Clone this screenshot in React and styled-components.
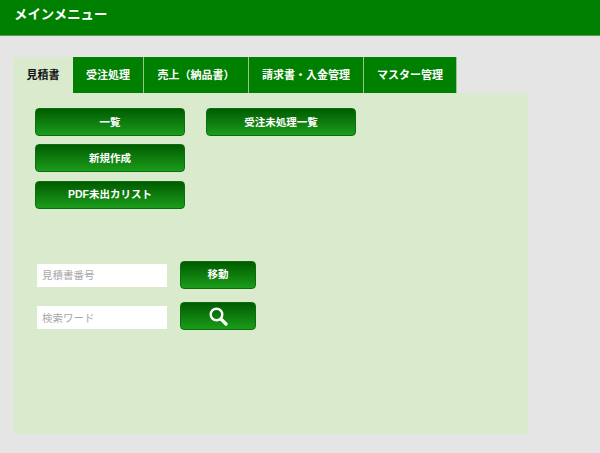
import React from "react";
import styled, { createGlobalStyle } from "styled-components";

const Global = createGlobalStyle`
html,body{margin:0;padding:0;background:#e5e5e5;}
body{font-family:"Liberation Sans","Noto Sans CJK JP",sans-serif;}
`;

const Header = styled.header`
height:35px;
background:#008000;
border-bottom:1px solid #5a9a4a;
color:#fff;
font-size:13.4px;
font-weight:bold;
line-height:30px;
padding-left:14px;
`;

const Main = styled.main`
width:515px;
padding:21px 0 0 13px;
`;

const Tabs = styled.nav`
display:flex;
height:36px;
`;

const Tab = styled.div`
display:flex;
align-items:center;
justify-content:center;
box-sizing:border-box;
width:${props => props.$w}px;
padding-bottom:2px;
font-size:11px;
font-weight:bold;
color:${props => (props.$active ? "#111" : "#fff")};
background:${props => (props.$active ? "#daeacc" : "#008000")};
border-right:${props => (props.$active ? "none" : "1px solid #9cc48c")};
`;

const Panel = styled.section`
height:341px;
box-sizing:border-box;
background:#daeacc;
padding:15px 22px 0;
`;

const MenuGrid = styled.div`
display:grid;
grid-template-columns:150px 150px;
column-gap:21px;
row-gap:8.33px;
`;

const GreenButton = styled.button`
display:flex;
align-items:center;
justify-content:center;
box-sizing:border-box;
width:${props => props.$w || 150}px;
height:28px;
padding:0 0 ${props => (props.$icon ? 0 : 2)}px;
border:1px solid #0a6e0a;
border-radius:4px;
background:linear-gradient(#005c00,#1b9c1b);
color:#fff;
font-family:inherit;
font-size:10.5px;
font-weight:bold;
`;

const Forms = styled.div`
margin-top:52.33px;
display:flex;
flex-direction:column;
gap:13px;
`;

const FormRow = styled.div`
display:flex;
align-items:center;
gap:13px;
padding-left:2px;
`;

const Field = styled.input`
box-sizing:border-box;
width:130px;
height:23px;
margin-top:${props => props.$drop}px;
border:none;
background:#fff;
padding:0 5px;
font-family:inherit;
font-size:10.5px;
&::placeholder{color:#a8a8a8;opacity:1;}
`;

const SearchIcon = () => (
  <svg width="20" height="20" viewBox="0 0 20 20" fill="none" stroke="#fff">
    <circle cx="8.5" cy="8.5" r="5.8" strokeWidth="2.4" />
    <path d="M13 13l5 5" strokeWidth="3.2" strokeLinecap="round" />
  </svg>
);

const App = () => {
  return (
    <>
      <Global />
      <Header>メインメニュー</Header>
      <Main>
        <Tabs>
          <Tab $w={60} $active>見積書</Tab>
          <Tab $w={71}>受注処理</Tab>
          <Tab $w={105}>売上（納品書）</Tab>
          <Tab $w={115}>請求書・入金管理</Tab>
          <Tab $w={93}>マスター管理</Tab>
        </Tabs>
        <Panel>
          <MenuGrid>
            <GreenButton>一覧</GreenButton>
            <GreenButton>受注未処理一覧</GreenButton>
            <GreenButton>新規作成</GreenButton>
            <span />
            <GreenButton>PDF未出カリスト</GreenButton>
          </MenuGrid>
          <Forms>
            <FormRow>
              <Field placeholder="見積書番号" $drop={1} />
              <GreenButton $w={76}>移動</GreenButton>
            </FormRow>
            <FormRow>
              <Field placeholder="検索ワード" $drop={4} />
              <GreenButton $w={76} $icon><SearchIcon /></GreenButton>
            </FormRow>
          </Forms>
        </Panel>
      </Main>
    </>
  );
};

export default App;
